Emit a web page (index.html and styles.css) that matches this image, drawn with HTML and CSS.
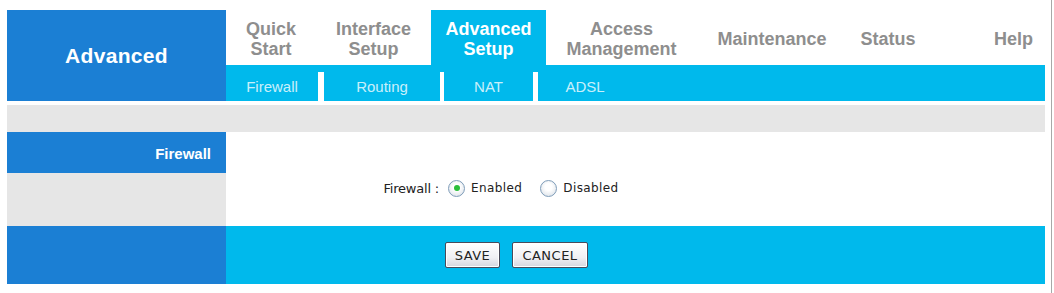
FILE: index.html
```html
<!DOCTYPE html>
<html>
<head>
<meta charset="utf-8">
<link rel="stylesheet" href="styles.css">
</head>
<body>
<div class="page">
  <div class="frame">
    <div class="header">
      <div class="logo">Advanced</div>
      <div class="navcol">
        <div class="topnav">
          <div class="tab w-quick">Quick<br>Start</div>
          <div class="tab w-iface">Interface<br>Setup</div>
          <div class="tab w-adv active">Advanced<br>Setup</div>
          <div class="tab w-access">Access<br>Management</div>
          <div class="tab w-maint">Maintenance</div>
          <div class="tab w-status">Status</div>
          <div class="tab w-help">Help</div>
        </div>
        <div class="subnav">
          <div class="sub s-fw">Firewall</div>
          <div class="sep s1"></div>
          <div class="sub s-rt">Routing</div>
          <div class="sep s2"></div>
          <div class="sub s-nat">NAT</div>
          <div class="sep s3"></div>
          <div class="sub s-adsl">ADSL</div>
        </div>
      </div>
    </div>
    <div class="band"></div>
    <div class="main">
      <div class="side">
        <div class="side-head">Firewall</div>
        <div class="side-fill"></div>
      </div>
      <div class="content">
        <div class="formrow">
          <div class="label">Firewall :</div>
          <div class="opts">
            <span class="radio checked"></span><span class="opt opt-first">Enabled</span>
            <span class="radio"></span><span class="opt">Disabled</span>
          </div>
        </div>
      </div>
    </div>
    <div class="footer">
      <div class="foot-left"></div>
      <div class="foot-right">
        <button class="btn btn-save">SAVE</button>
        <button class="btn btn-cancel">CANCEL</button>
      </div>
    </div>
  </div>
</div>
</body>
</html>
```

FILE: styles.css
```css
html, body {
  margin: 0;
  padding: 0;
  background: #ffffff;
}

.page {
  width: 1052px;
  height: 293px;
  box-sizing: border-box;
  padding: 10px 0 0 7px;
  border-right: 1px solid #a8a8a8;
}

.frame {
  width: 1038px;
}

.header {
  display: grid;
  grid-template-columns: 219px 1fr;
  height: 91px;
}

.logo {
  background: #1b7fd4;
  color: #ffffff;
  font-family: "Liberation Sans", Arial, sans-serif;
  font-weight: bold;
  font-size: 21px;
  display: flex;
  align-items: center;
  justify-content: center;
  letter-spacing: 0.3px;
}

.navcol {
  display: flex;
  flex-direction: column;
}

.topnav {
  display: flex;
  height: 55px;
}

.tab {
  display: flex;
  align-items: center;
  justify-content: center;
  text-align: center;
  font-family: "Liberation Sans", Arial, sans-serif;
  font-weight: bold;
  font-size: 18px;
  line-height: 20px;
  color: #8e8e8e;
  padding-top: 3px;
  box-sizing: border-box;
}

.tab.active {
  background: #00b9ec;
  color: #ffffff;
}

.w-quick { width: 90px; }
.w-iface { width: 115px; }
.w-adv { width: 115px; }
.w-access { width: 151px; }
.w-maint { width: 150px; }
.w-status { width: 82px; }
.w-help {
  flex: 1;
  justify-content: flex-end;
  padding-right: 12px;
}

.subnav {
  display: flex;
  height: 36px;
  background: #00b9ec;
}

.sub {
  display: flex;
  align-items: center;
  justify-content: center;
  padding-top: 6px;
  box-sizing: border-box;
  font-family: "Liberation Sans", Arial, sans-serif;
  font-size: 15px;
  color: rgba(255, 255, 255, 0.8);
}

.s-fw { width: 92px; }
.s-rt { width: 116px; }
.s-nat { width: 89px; }
.s-adsl { width: 94px; }

.sep {
  align-self: flex-end;
  height: 29px;
  background: #ffffff;
}

.s1 { width: 6px; }
.s2 { width: 4px; }
.s3 { width: 5px; }

.band {
  margin-top: 4px;
  height: 27px;
  background: #e6e6e6;
}

.main {
  display: grid;
  grid-template-columns: 219px 1fr;
  height: 94px;
}

.side {
  display: flex;
  flex-direction: column;
}

.side-head {
  height: 41px;
  background: #1b7fd4;
  color: #ffffff;
  font-family: "Liberation Sans", Arial, sans-serif;
  font-weight: bold;
  font-size: 15px;
  display: flex;
  align-items: center;
  justify-content: flex-end;
  padding-right: 15px;
  padding-top: 1px;
  box-sizing: border-box;
}

.side-fill {
  flex: 1;
  background: #e6e6e6;
}

.content {
  background: #ffffff;
  padding-top: 47px;
  box-sizing: border-box;
}

.formrow {
  display: flex;
  align-items: center;
  height: 18px;
}

.label {
  width: 213px;
  text-align: right;
  font-family: "DejaVu Sans", Verdana, sans-serif;
  font-size: 13px;
  color: #222222;
  letter-spacing: -0.2px;
}

.opts {
  display: flex;
  align-items: center;
  margin-left: 9px;
}

.radio {
  width: 17px;
  height: 17px;
  border-radius: 50%;
  border: 1px solid #7f9db9;
  background: radial-gradient(circle at 50% 40%, #ffffff 30%, #d4dbe3 100%);
  box-sizing: border-box;
  position: relative;
  margin-right: 6px;
}

.radio.checked::after {
  content: "";
  position: absolute;
  left: 4.5px;
  top: 4.5px;
  width: 6px;
  height: 6px;
  border-radius: 50%;
  background: #2bbf3a;
}

.opt {
  font-family: "DejaVu Sans", Verdana, sans-serif;
  font-size: 12px;
  color: #222222;
  letter-spacing: 0.4px;
}

.opt-first {
  margin-right: 18px;
}

.footer {
  display: grid;
  grid-template-columns: 219px 1fr;
  height: 58px;
}

.foot-left {
  background: #1b7fd4;
}

.foot-right {
  background: #00b9ec;
  display: flex;
  align-items: center;
  padding-left: 219px;
  gap: 12px;
}

.btn {
  height: 26px;
  margin: 0;
  padding: 0;
  border: 1px solid #4a4a5a;
  border-radius: 2px;
  background: linear-gradient(#ffffff 0%, #f0f0f4 60%, #d6d6de 100%);
  box-shadow: inset 0 0 0 1px #ffffff;
  font-family: "DejaVu Sans", Verdana, sans-serif;
  font-size: 13px;
  color: #222222;
  letter-spacing: 0.5px;
}

.btn-save { width: 55px; }
.btn-cancel { width: 76px; }
```
